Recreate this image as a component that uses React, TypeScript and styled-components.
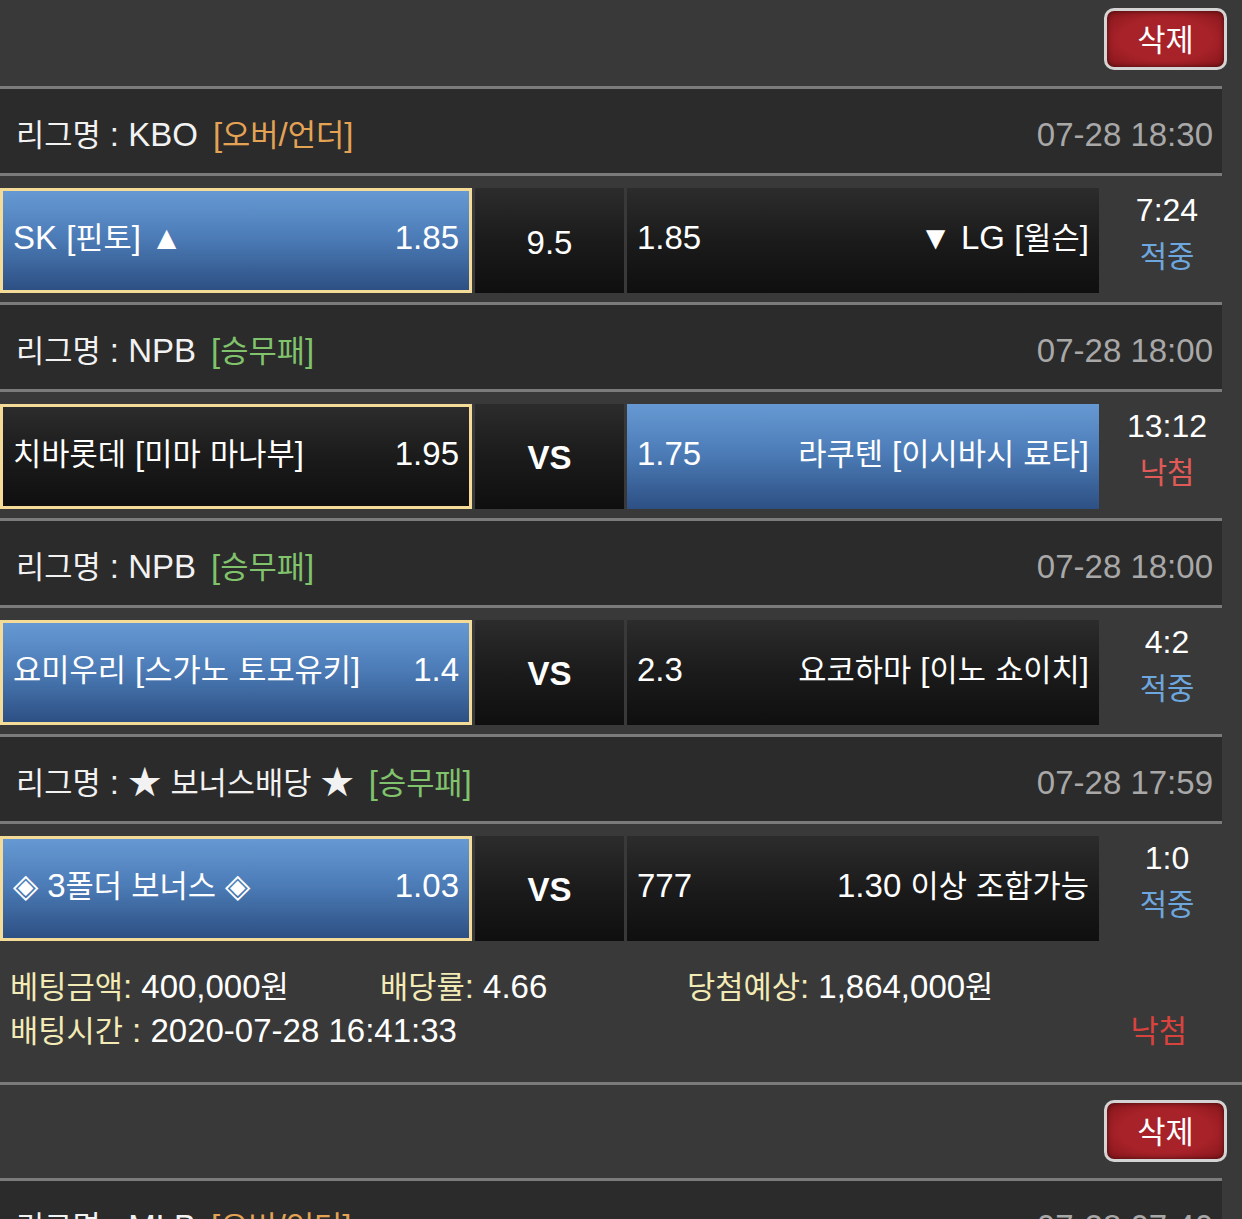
import React from 'react';
import styled, { createGlobalStyle } from 'styled-components';

const FONT = `"Liberation Sans", "Noto Sans CJK KR", sans-serif`;

const GlobalStyle = createGlobalStyle`
  html, body { margin: 0; padding: 0; background: #393939; overflow: hidden; }
  body { font-family: ${FONT}; }
`;

const Hangul = styled.span`
  font-family: "Noto Sans CJK KR", sans-serif;
  font-size: 0.93em;
  line-height: 1;
`;

const HANGUL_RE = /([\uAC00-\uD7A3]+)/;
function mix(text: string) {
  return text.split(HANGUL_RE).map((part, i) =>
    HANGUL_RE.test(part) ? <Hangul key={i}>{part}</Hangul> : <React.Fragment key={i}>{part}</React.Fragment>
  );
}

const Page = styled.div`
  width: 1242px;
  height: 1219px;
  overflow: hidden;
  background: #393939;
  color: #ffffff;
  font-family: ${FONT};
  font-size: 33px;
  line-height: 40px;
`;

const ActionBar = styled.div<{ $top: number }>`
  display: flex;
  justify-content: flex-end;
  padding: ${(p) => p.$top}px 15px 16px 0;
`;

const DeleteButton = styled.button`
  width: 123px;
  height: 62px;
  box-sizing: border-box;
  border: 3px solid #d4d4d4;
  border-radius: 10px;
  background: radial-gradient(ellipse at center, #a82229 55%, #83161a 100%);
  box-shadow: inset 0 0 5px rgba(0, 0, 0, 0.55);
  color: #ffffff;
  font-family: ${FONT};
  font-size: 33px;
  line-height: 40px;
  padding: 0 0 2px;
  display: flex;
  align-items: center;
  justify-content: center;
`;

const LeagueHeader = styled.div`
  box-sizing: border-box;
  margin-right: 20px;
  height: 90px;
  border-top: 3px solid #7b7b7b;
  border-bottom: 3px solid #7b7b7b;
  background: #2b2b2b;
  display: flex;
  align-items: center;
  justify-content: space-between;
  padding: 7px 9px 0 16px;
`;

const LeagueName = styled.div`
  color: #f2f2f2;
  white-space: nowrap;
`;

const Market = styled.span<{ $color: string }>`
  color: ${(p) => p.$color};
  margin-left: 15px;
`;

const GameDate = styled.div`
  color: #a8a8a8;
  white-space: nowrap;
`;

const MatchRow = styled.div`
  display: grid;
  grid-template-columns: 472px 149px 472px 1fr;
  column-gap: 3px;
  height: 105px;
  margin: 12px 0 9px;
`;

const BLUE = 'linear-gradient(180deg, #6699d3 0%, #4d7db8 45%, #2d5084 100%)';
const DARK = 'linear-gradient(180deg, #2c2c2c 0%, #1b1b1b 50%, #0f0f0f 100%)';

const Pick = styled.div<{ $selected: boolean; $marked: boolean }>`
  box-sizing: border-box;
  display: flex;
  align-items: center;
  justify-content: space-between;
  padding: 0 10px 5px;
  background: ${(p) => (p.$selected ? BLUE : DARK)};
  border: ${(p) => (p.$marked ? '3px solid #f4dc98' : 'none')};
  white-space: nowrap;
`;

const MidCell = styled.div<{ $bold: boolean }>`
  display: flex;
  align-items: center;
  justify-content: center;
  background: ${DARK};
  font-weight: ${(p) => (p.$bold ? 700 : 400)};
  padding-top: ${(p) => (p.$bold ? 2 : 4)}px;
  box-sizing: border-box;
`;

const ScoreCol = styled.div`
  display: flex;
  flex-direction: column;
  align-items: center;
  padding-right: 10px;
  margin-top: -1px;
  line-height: 46px;
  font-size: 32px;
`;

const Result = styled.div<{ $win: boolean }>`
  color: ${(p) => (p.$win ? '#6ea6de' : '#e05a58')};
`;

const Summary = styled.div`
  padding: 15px 0 29px 10px;
  line-height: 44px;
  white-space: nowrap;
`;

const SummaryGrid = styled.div`
  display: grid;
  grid-template-columns: 370px 307px 1fr;
`;

const SummaryLine = styled.div`
  display: flex;
  justify-content: space-between;
  padding-right: 55px;
`;

const Label = styled.span`
  color: #f3ebb6;
`;

const LostMark = styled.span`
  color: #d9433e;
`;

const Divider = styled.div`
  height: 3px;
  background: #7b7b7b;
`;

type Game = {
  league: string;
  market: string;
  marketColor: string;
  date: string;
  home: string;
  homeOdds: string;
  mid: string;
  awayOdds: string;
  away: string;
  pick: 'home' | 'away';
  score: string;
  win: boolean;
};

const ORANGE = '#e4a354';
const GREEN = '#80c36c';

const slip1: Game[] = [
  { league: 'KBO', market: '[오버/언더]', marketColor: ORANGE, date: '07-28 18:30', home: 'SK [핀토] ▲', homeOdds: '1.85', mid: '9.5', awayOdds: '1.85', away: '▼ LG [윌슨]', pick: 'home', score: '7:24', win: true },
  { league: 'NPB', market: '[승무패]', marketColor: GREEN, date: '07-28 18:00', home: '치바롯데 [미마 마나부]', homeOdds: '1.95', mid: 'VS', awayOdds: '1.75', away: '라쿠텐 [이시바시 료타]', pick: 'away', score: '13:12', win: false },
  { league: 'NPB', market: '[승무패]', marketColor: GREEN, date: '07-28 18:00', home: '요미우리 [스가노 토모유키]', homeOdds: '1.4', mid: 'VS', awayOdds: '2.3', away: '요코하마 [이노 쇼이치]', pick: 'home', score: '4:2', win: true },
  { league: '★ 보너스배당 ★', market: '[승무패]', marketColor: GREEN, date: '07-28 17:59', home: '◈ 3폴더 보너스 ◈', homeOdds: '1.03', mid: 'VS', awayOdds: '777', away: '1.30 이상 조합가능', pick: 'home', score: '1:0', win: true },
];

const slip2: Game[] = [
  { league: 'MLB', market: '[오버/언더]', marketColor: ORANGE, date: '07-28 07:40', home: '뉴욕메츠 [디그롬] ▲', homeOdds: '1.90', mid: '7.5', awayOdds: '1.80', away: '▼ 보스턴 [페레스]', pick: 'home', score: '3:5', win: true },
];

function GameBlock({ g }: { g: Game }) {
  return (
    <>
      <LeagueHeader>
        <LeagueName>
          {mix(`리그명 : ${g.league}`)}
          <Market $color={g.marketColor}>{mix(g.market)}</Market>
        </LeagueName>
        <GameDate>{g.date}</GameDate>
      </LeagueHeader>
      <MatchRow>
        <Pick $selected={g.pick === 'home'} $marked>
          <span>{mix(g.home)}</span>
          <span>{g.homeOdds}</span>
        </Pick>
        <MidCell $bold={g.mid === 'VS'}>{g.mid}</MidCell>
        <Pick $selected={g.pick === 'away'} $marked={false}>
          <span>{g.awayOdds}</span>
          <span>{mix(g.away)}</span>
        </Pick>
        <ScoreCol>
          <div>{g.score}</div>
          <Result $win={g.win}>{mix(g.win ? '적중' : '낙첨')}</Result>
        </ScoreCol>
      </MatchRow>
    </>
  );
}

export default function App() {
  return (
    <Page>
      <GlobalStyle />
      <ActionBar $top={8}>
        <DeleteButton>{mix('삭제')}</DeleteButton>
      </ActionBar>
      {slip1.map((g, i) => (
        <GameBlock key={i} g={g} />
      ))}
      <Summary>
        <SummaryGrid>
          <span>
            <Label>{mix('베팅금액:')}</Label> {mix('400,000원')}
          </span>
          <span>
            <Label>{mix('배당률:')}</Label> 4.66
          </span>
          <span>
            <Label>{mix('당첨예상:')}</Label> {mix('1,864,000원')}
          </span>
        </SummaryGrid>
        <SummaryLine>
          <span>
            <Label>{mix('배팅시간 :')}</Label> 2020-07-28 16:41:33
          </span>
          <LostMark>{mix('낙첨')}</LostMark>
        </SummaryLine>
      </Summary>
      <Divider />
      <ActionBar $top={15}>
        <DeleteButton>{mix('삭제')}</DeleteButton>
      </ActionBar>
      {slip2.map((g, i) => (
        <GameBlock key={i} g={g} />
      ))}
    </Page>
  );
}
